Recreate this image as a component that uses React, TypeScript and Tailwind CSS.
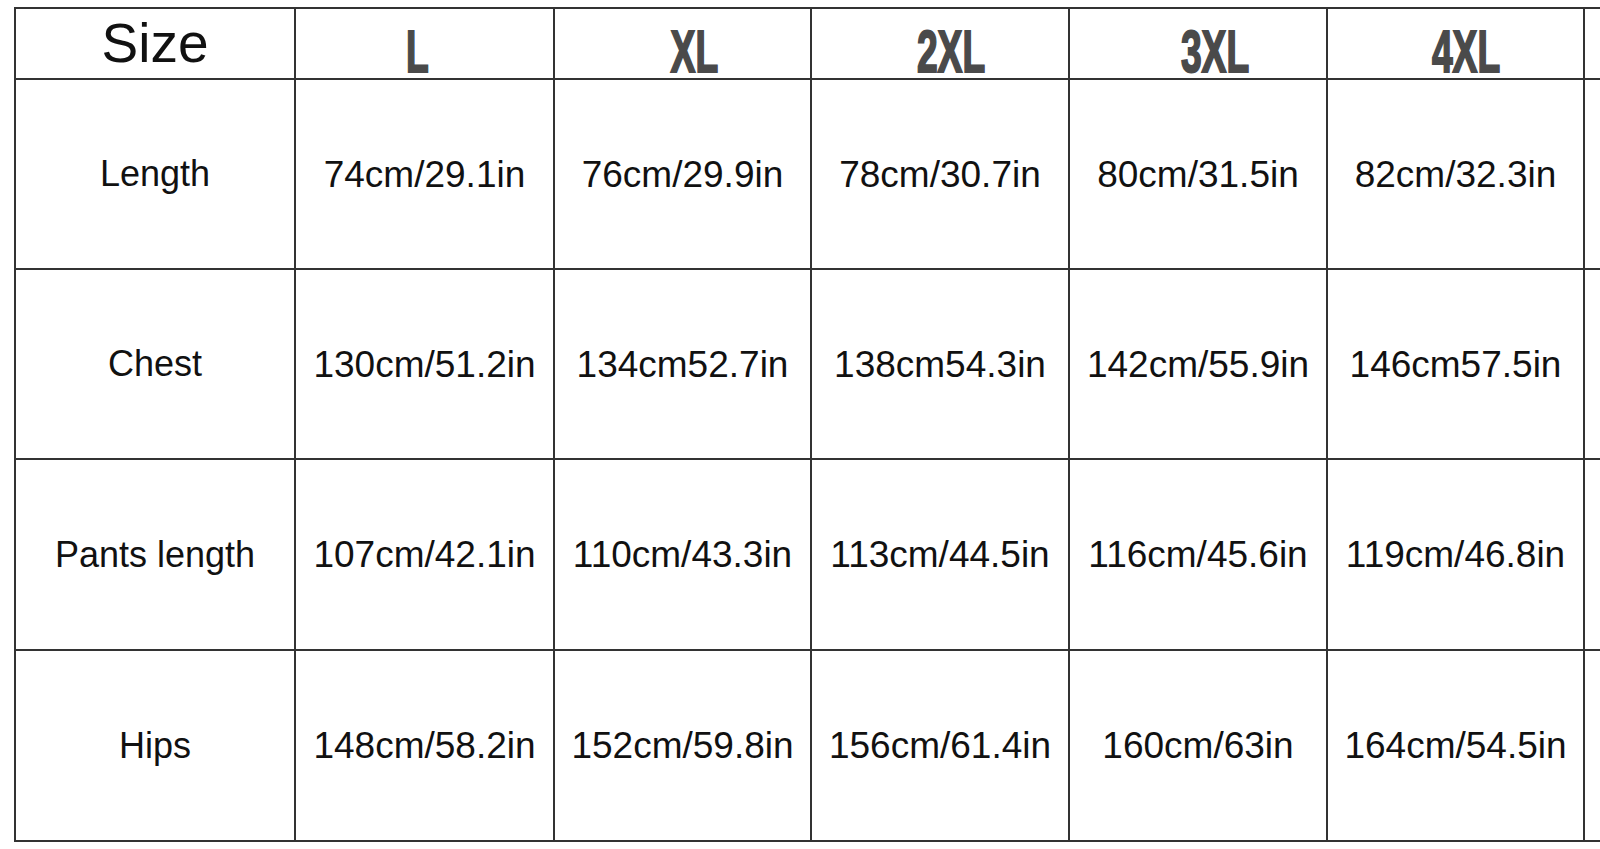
import React from "react";

const sizes = [
  { label: "L", cls: "mr-[14px]" },
  { label: "XL", cls: "ml-[24px]" },
  { label: "2XL", cls: "ml-[22px]" },
  { label: "3XL", cls: "ml-[34px]" },
  { label: "4XL", cls: "ml-[22px]" },
];

const rows: { name: string; values: string[] }[] = [
  { name: "Length", values: ["74cm/29.1in", "76cm/29.9in", "78cm/30.7in", "80cm/31.5in", "82cm/32.3in"] },
  { name: "Chest", values: ["130cm/51.2in", "134cm52.7in", "138cm54.3in", "142cm/55.9in", "146cm57.5in"] },
  { name: "Pants length", values: ["107cm/42.1in", "110cm/43.3in", "113cm/44.5in", "116cm/45.6in", "119cm/46.8in"] },
  { name: "Hips", values: ["148cm/58.2in", "152cm/59.8in", "156cm/61.4in", "160cm/63in", "164cm/54.5in"] },
];

export default function App() {
  return (
    <div className="w-[1600px] h-[849px] overflow-hidden bg-white pl-[14px] pt-[7px] font-['Liberation_Sans',Arial,sans-serif]">
      <div className="grid w-[1700px] grid-cols-[278px_257px_255px_256px_256px_255px_1fr] grid-rows-[69px_188px_188px_189px_189px] gap-[2px] bg-[#333333] p-[2px]">
        <div className="flex items-center justify-center bg-white text-[55px] leading-none text-[#111111]">
          Size
        </div>
        {sizes.map((s) => (
          <div key={s.label} className="flex items-start justify-center bg-white pt-[21px]">
            <span
              className={`inline-block scale-x-[0.62] text-[60px] font-bold leading-[44px] text-[#4a4a4a] [-webkit-text-stroke:2px_#4a4a4a] ${s.cls}`}
            >
              {s.label}
            </span>
          </div>
        ))}
        <div className="bg-white" />
        {rows.map((r) => (
          <React.Fragment key={r.name}>
            <div className="flex items-center justify-center bg-white text-[36px] leading-none text-[#111111] whitespace-nowrap">
              {r.name}
            </div>
            {r.values.map((v, i) => (
              <div
                key={i}
                className="flex items-center justify-center bg-white text-[37px] leading-none text-[#111111] whitespace-nowrap"
              >
                {v}
              </div>
            ))}
            <div className="bg-white" />
          </React.Fragment>
        ))}
      </div>
    </div>
  );
}
